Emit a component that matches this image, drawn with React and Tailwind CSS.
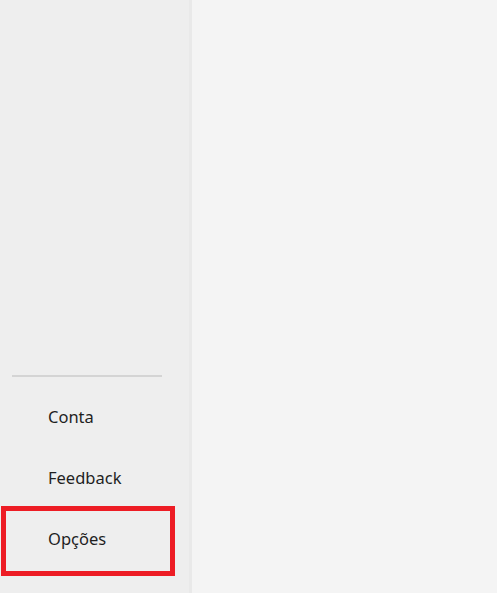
export default function App() {
  const items = ["Conta", "Feedback", "Opções"]

  return (
    <div className="flex h-[593px] w-full bg-[#f4f4f4] font-['Noto_Sans','Open_Sans',sans-serif]">
      <div className="flex w-[189px] flex-col bg-[#eeeeee] pb-[23px]">
        <div className="flex-1" />
        <div className="mb-[10px] ml-3 mr-[27px] h-[2px] bg-[#d4d4d4]" />
        {items.map((label, i) => (
          <div key={label} className="relative flex h-[61px] items-center pl-12 text-[16.5px] text-[#1f1f1f]">
            {label}
            {i === 2 ? (
              <div className="absolute left-[1px] top-[-3px] h-[70px] w-[174px] border-[5px] border-[#ed1c24]" />
            ) : null}
          </div>
        ))}
      </div>
      <div className="w-[3px] bg-[#e9e9e9]" />
      <div className="flex-1" />
    </div>
  )
}
